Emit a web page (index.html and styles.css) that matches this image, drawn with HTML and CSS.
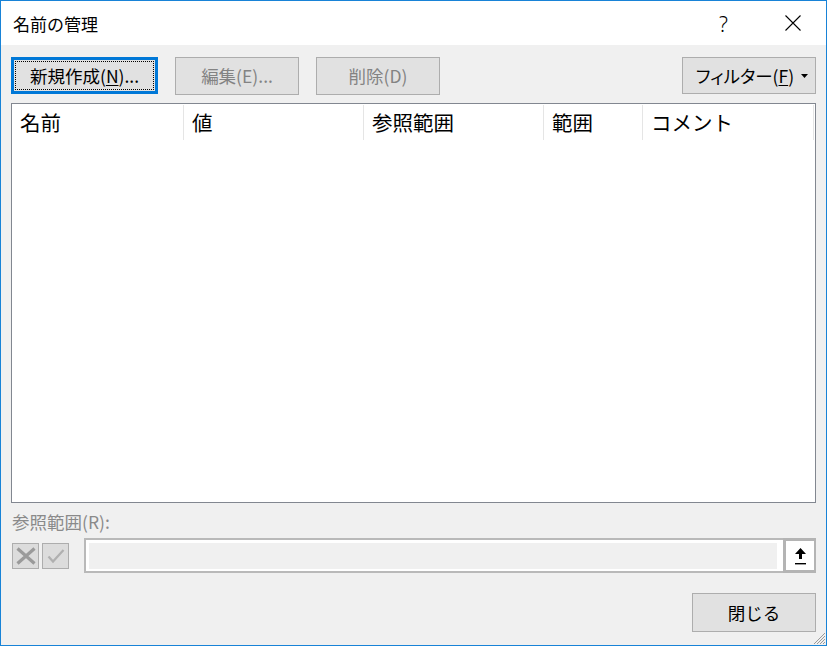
FILE: index.html
```html
<!DOCTYPE html>
<html lang="ja">
<head>
<meta charset="utf-8">
<title>名前の管理</title>
<link rel="stylesheet" href="styles.css">
</head>
<body>
<div class="window">
  <div class="titlebar">
    <span class="title">名前の管理</span>
    <div class="title-controls">
      <span class="help">?</span>
      <span class="close-x"><svg width="16" height="16" viewBox="0 0 16 16"><path d="M0.5 0.5 L15.5 15.5 M15.5 0.5 L0.5 15.5" stroke="#000" stroke-width="1.1" fill="none"/></svg></span>
    </div>
  </div>
  <div class="content">
    <div class="toolbar">
      <button class="btn btn-default"><span class="focus-rect">新規作成(<u>N</u>)...</span></button>
      <button class="btn btn-disabled">編集(E)...</button>
      <button class="btn btn-disabled">削除(D)</button>
      <button class="btn btn-filter"><span class="btn-label">フィルター(<u>F</u>)</span><svg class="caret" width="7" height="4" viewBox="0 0 7 4"><path d="M0 0 H7 L3.5 4 Z" fill="#000"/></svg></button>
    </div>
    <div class="list">
      <div class="list-header">
        <div class="col col-name">名前</div>
        <div class="col col-value">値</div>
        <div class="col col-ref">参照範囲</div>
        <div class="col col-scope">範囲</div>
        <div class="col col-comment">コメント</div>
      </div>
    </div>
    <div class="ref-label">参照範囲(R):</div>
    <div class="ref-row">
      <span class="mini"><svg width="20" height="18" viewBox="0 0 20 18"><path d="M1.5 1.5 L18.5 16.5 M18.5 1.5 L1.5 16.5" stroke="#9a9a9a" stroke-width="3.2" fill="none"/></svg></span>
      <span class="mini"><svg width="18" height="16" viewBox="0 0 18 16"><path d="M1.5 8.5 L6 13.5 L16.5 2" stroke="#b0b0b0" stroke-width="2.2" fill="none"/></svg></span>
      <div class="ref-input"><div class="ref-field"></div></div>
      <span class="collapse-btn"><svg width="11" height="17" viewBox="0 0 11 17"><path d="M5.5 0 L11 6 H7 V11 H4 V6 H0 Z" fill="#000"/><rect x="0" y="15" width="11" height="1.4" fill="#000"/></svg></span>
    </div>
    <div class="footer">
      <button class="btn btn-close">閉じる</button>
    </div>
  </div>
  <svg class="grip" width="12" height="12" viewBox="0 0 12 12"><path d="M11 3 L3 11 M11 6 L6 11 M11 9 L9 11 M11 0 L0 11" stroke="#9a9a9a" stroke-width="1" fill="none"/></svg>
</div>
</body>
</html>
```
FILE: styles.css
```css
* { box-sizing: border-box; }
html, body { margin: 0; padding: 0; }
body {
  width: 827px;
  height: 646px;
  overflow: hidden;
  background: #f0f0f0;
  font-family: "Noto Sans CJK JP", "Noto Sans", sans-serif;
  color: #000;
}
.window {
  position: relative;
  width: 827px;
  height: 646px;
  border: 1px solid #1883d7;
  background: #f0f0f0;
  display: flex;
  flex-direction: column;
}
.titlebar {
  height: 44px;
  background: #fff;
  display: flex;
  align-items: center;
  justify-content: space-between;
  padding-left: 12px;
  padding-right: 25px;
  flex: none;
}
.title {
  font-size: 17px;
  line-height: 22px;
  padding-top: 1px;
}
.title-controls {
  display: flex;
  align-items: center;
}
.help {
  font-family: "Noto Sans", "DejaVu Sans", sans-serif;
  font-size: 21px;
  font-weight: 300;
  line-height: 22px;
  margin-right: 57px;
  padding-top: 1px;
}
.close-x {
  display: flex;
  width: 16px;
  height: 16px;
}
.content {
  flex: 1;
  padding: 12px 10px 0 10px;
  display: flex;
  flex-direction: column;
}
.toolbar {
  display: flex;
  align-items: flex-start;
  height: 38px;
}
.btn {
  font-family: inherit;
  font-size: 17.5px;
  background: #e1e1e1;
  border: 1px solid #adadad;
  color: #000;
  padding: 0;
  margin: 0;
  display: flex;
  align-items: center;
  justify-content: center;
  line-height: 22px;
  white-space: nowrap;
}
.btn u { text-decoration-thickness: 1px; text-underline-offset: 2px; }
.btn-default {
  width: 147px;
  height: 37px;
  border: 3px solid #0078d7;
  padding: 1px;
}
.focus-rect {
  flex: 1;
  align-self: stretch;
  border: 1px dotted #000;
  display: flex;
  align-items: center;
  justify-content: center;
}
.btn-disabled {
  width: 124px;
  height: 38px;
  color: #838383;
  margin-left: 17px;
}
.btn-filter {
  width: 134px;
  height: 37px;
  margin-left: auto;
  padding-left: 6px;
  gap: 7px;
}
.btn-label {
  white-space: nowrap;
  font-feature-settings: "palt" 1;
}
.caret { flex: none; }
.list {
  margin-top: 8px;
  height: 400px;
  background: #fff;
  border: 1px solid #828790;
}
.list-header {
  display: flex;
  margin-top: 1px;
  height: 35px;
}
.col {
  font-size: 20.5px;
  line-height: 35px;
  padding-left: 8px;
  border-right: 1px solid #e5e5e5;
  white-space: nowrap;
}
.col-name { width: 172px; }
.col-value { width: 180px; }
.col-ref { width: 180px; }
.col-scope { width: 99px; }
.col-comment { width: 171px; }
.ref-label {
  margin-top: 7px;
  margin-left: 1px;
  font-size: 17.5px;
  line-height: 24px;
  color: #8a8a8a;
}
.ref-row {
  margin-top: 4px;
  display: flex;
  align-items: center;
  height: 35px;
}
.mini {
  width: 27px;
  height: 26px;
  border: 1px solid #adadad;
  background: #dcdcdc;
  display: flex;
  align-items: center;
  justify-content: center;
  margin-left: 1px;
}
.mini + .mini { margin-left: 3px; }
.ref-input {
  margin-left: 15px;
  flex: 1;
  height: 35px;
  border: 2px solid #b9b9b9;
  border-right: none;
  background: #fff;
  padding: 3px 6px 2px 3px;
  display: flex;
}
.ref-field {
  flex: 1;
  background: #f0f0f0;
}
.collapse-btn {
  width: 33px;
  height: 35px;
  border: 3px solid #b4b4b4;
  border-right-width: 2px;
  background: #fff;
  display: flex;
  align-items: center;
  justify-content: center;
  padding-top: 1px;
}
.footer {
  display: flex;
  justify-content: flex-end;
  margin-top: 20px;
}
.btn-close {
  width: 124px;
  height: 39px;
}
.grip {
  position: absolute;
  right: 0;
  bottom: 0;
}
```
